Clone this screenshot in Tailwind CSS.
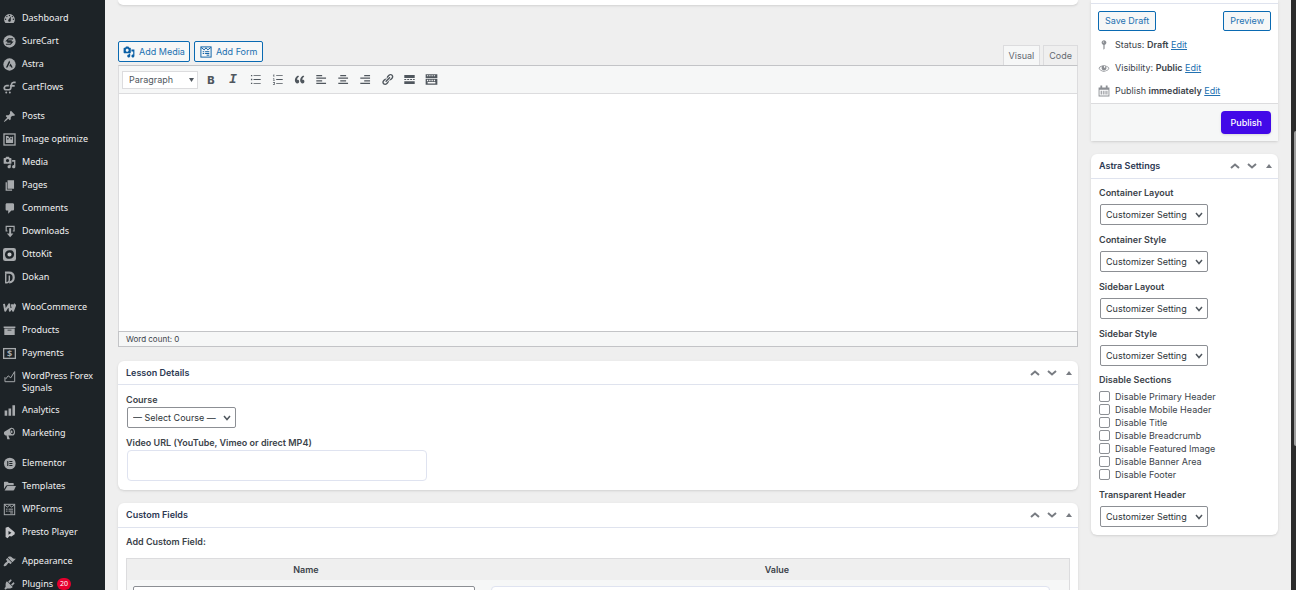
<!DOCTYPE html>
<html lang="en">
<head>
    <meta charset="UTF-8">
    <meta name="viewport" content="width=device-width, initial-scale=1.0">
    <script src="https://cdn.jsdelivr.net/npm/@tailwindcss/browser@4"></script>
    <title>Add New Lesson</title>
</head>
<body class="flex h-screen overflow-hidden bg-[#efefef] font-['Inter',sans-serif] text-[9px] leading-3 text-[#3c434a]">

    <!-- Admin menu -->
    <nav class="w-[105px] shrink-0 bg-[#1d2327] pt-[7px] font-['Noto_Sans',sans-serif] text-[#f0f0f1]" aria-label="Main menu">
        <ul class="mb-[6px]">
            <li><a href="#" class="flex gap-[6px] py-[5px] pl-[3px]">
                <svg class="size-[13px] shrink-0 fill-[#a7aaad]" viewBox="0 0 20 20" fill-rule="evenodd"><path d="M3.760 17h12.480A8.600 8.600 0 0 0 10 3a8.600 8.600 0 0 0-6.240 14zM10 4.200a1.100 1.100 0 1 1 0 2.200 1.100 1.100 0 0 1 0-2.200zM6 6a1.100 1.100 0 1 1 0 2.200A1.100 1.100 0 0 1 6 6zm8.400 0a1.100 1.100 0 1 1 0 2.200 1.100 1.100 0 0 1 0-2.200zM8.630 11.550 12 7v6c0 1.100-.9 2-2 2s-2-.9-2-2c0-.57.24-1.080.63-1.450zM4 10a1.100 1.100 0 1 1 0 2.200A1.100 1.100 0 0 1 4 10zm12 0a1.100 1.100 0 1 1 0 2.200 1.100 1.100 0 0 1 0-2.200z"/></svg>
                <span>Dashboard</span></a></li>
            <li><a href="#" class="flex gap-[6px] py-[5px] pl-[3px]">
                <svg class="size-[13px] shrink-0" viewBox="0 0 20 20"><circle cx="10" cy="10" r="9.500" fill="#a7aaad"/><path d="M15.500 6H8.500L5.500 9h8M4.500 14.200h7l3-3.200h-8" fill="none" stroke="#1d2327" stroke-width="1.700"/></svg>
                <span>SureCart</span></a></li>
            <li><a href="#" class="flex gap-[6px] py-[5px] pl-[3px]">
                <svg class="size-[13px] shrink-0" viewBox="0 0 20 20"><circle cx="10" cy="10" r="9.500" fill="#a7aaad"/><path d="M9.600 3.800 4.500 14.600h2.400l4-8zM11.700 8.400l-2.100 4.200h2.100l.8 2h2.500z" fill="#1d2327"/></svg>
                <span>Astra</span></a></li>
            <li><a href="#" class="flex gap-[6px] py-[5px] pl-[3px]">
                <svg class="size-[13px] shrink-0" viewBox="0 0 20 20" fill="none" stroke="#a7aaad" stroke-width="2.600"><path d="M19.500 2h-3c-2 0-3 1-3.400 3l-1 5.500c-.3 2-1.500 3-3.500 3H5c-2.500 0-3.500-1.500-3-3.500s1.500-3 3.500-3H9M10.500 7.500H18"/><circle cx="5" cy="17.700" r="1.500" fill="#a7aaad" stroke="none"/><circle cx="10.500" cy="17.700" r="1.500" fill="#a7aaad" stroke="none"/></svg>
                <span>CartFlows</span></a></li>
        </ul>
        <ul class="mb-[7px]">
            <li><a href="#" class="flex gap-[6px] py-[5px] pl-[3px]">
                <svg class="size-[13px] shrink-0 fill-[#a7aaad]" viewBox="0 0 20 20"><path d="M10.440 3.020l1.820-1.820 6.360 6.350-1.830 1.820c-1.050-.68-2.480-.57-3.410.36l-.75.75c-.92.93-1.040 2.350-.35 3.410l-1.830 1.820-2.410-2.410-2.800 2.790c-.42.42-3.380 2.710-3.800 2.290s1.860-3.390 2.280-3.810l2.790-2.790L4.100 9.360l1.830-1.820c1.050.69 2.480.57 3.400-.36l.75-.75c.93-.92 1.050-2.350.36-3.410z"/></svg>
                <span>Posts</span></a></li>
            <li><a href="#" class="flex gap-[6px] py-[5px] pl-[3px]">
                <svg class="size-[13px] shrink-0" viewBox="0 0 20 20"><rect x="1.500" y="1.500" width="17" height="17" fill="none" stroke="#a7aaad" stroke-width="2"/><path d="M4.500 4.500H8l2 3 2-2 1.500 1.500 2-2.500v11h-11z" fill="#a7aaad"/><circle cx="7.500" cy="9" r="1.200" fill="#1d2327"/><circle cx="12.500" cy="9" r="1.200" fill="#1d2327"/></svg>
                <span class="whitespace-nowrap">Image optimize</span></a></li>
            <li><a href="#" class="flex gap-[6px] py-[5px] pl-[3px]">
                <svg class="size-[13px] shrink-0 fill-[#a7aaad]" viewBox="0 0 20 20"><path d="M13 11V4c0-.55-.45-1-1-1h-1.670L9 1H5L3.670 3H2c-.55 0-1 .45-1 1v7c0 .55.45 1 1 1h10c.55 0 1-.45 1-1zM7 4.500c1.380 0 2.500 1.120 2.500 2.500S8.380 9.500 7 9.500 4.500 8.380 4.500 7 5.620 4.500 7 4.500zM14 6h5v10.500c0 1.380-1.120 2.500-2.500 2.500S14 17.880 14 16.500s1.120-2.500 2.500-2.500c.17 0 .34.02.5.05V9h-3V6zm-4 8.050V13h2v3.500c0 1.380-1.120 2.500-2.500 2.500S7 17.880 7 16.500 8.120 14 9.500 14c.17 0 .34.02.5.05z"/></svg>
                <span>Media</span></a></li>
            <li><a href="#" class="flex gap-[6px] py-[5px] pl-[3px]">
                <svg class="size-[13px] shrink-0 fill-[#a7aaad]" viewBox="0 0 20 20"><path d="M7 15V2h10v13H7zm-1 1h8v2H4V5h2v11z"/></svg>
                <span>Pages</span></a></li>
            <li><a href="#" class="flex gap-[6px] py-[5px] pl-[3px]">
                <svg class="size-[13px] shrink-0 fill-[#a7aaad]" viewBox="0 0 20 20"><path d="M6 2h9c1.100 0 2 .9 2 2v7c0 1.100-.9 2-2 2h-2l-5 5v-5H6c-1.100 0-2-.9-2-2V4c0-1.100.9-2 2-2z"/></svg>
                <span>Comments</span></a></li>
            <li><a href="#" class="flex gap-[6px] py-[5px] pl-[3px]">
                <svg class="size-[13px] shrink-0 fill-[#a7aaad]" viewBox="0 0 20 20"><path d="M4 1h14v9h-3V8.500h1.200V3H5.800v5.500H7V10H4z"/><path d="M9.500 5h3v8H16l-5 6-5-6h3.500z"/></svg>
                <span>Downloads</span></a></li>
            <li><a href="#" class="flex gap-[6px] py-[5px] pl-[3px]">
                <svg class="size-[13px] shrink-0" viewBox="0 0 20 20"><rect width="20" height="20" rx="3.500" fill="#a7aaad"/><path d="M3 10c0-4 3-6.500 7-6.500h2c3 0 5 3 5 6.500 0 4-3 6.500-7 6.500H8c-3 0-5-3-5-6.500z" fill="#1d2327"/><circle cx="10" cy="10" r="3.200" fill="#c8cacc"/></svg>
                <span>OttoKit</span></a></li>
            <li><a href="#" class="flex gap-[6px] py-[5px] pl-[3px]">
                <svg class="size-[13px] shrink-0" viewBox="0 0 20 20" fill="none" stroke="#a7aaad"><path d="M3 2.500h6c5 0 7.500 3 7.500 7.500s-3 7.500-7 7.500" stroke-width="3.400"/><path d="M4.200 4v14c4 .5 5.500-1.500 5.500-5V7" stroke-width="2.200"/></svg>
                <span>Dokan</span></a></li>
        </ul>
        <ul class="mb-[7px]">
            <li><a href="#" class="flex gap-[6px] py-[5px] pl-[3px]">
                <svg class="size-[13px] shrink-0" viewBox="0 0 20 20" fill="none" stroke="#a7aaad" stroke-width="3" stroke-linejoin="round"><path d="M1.500 4.500 3.500 15 9.500 5l1 10 8-10.500M13.500 5l2 10 3.500-9.500"/></svg>
                <span>WooCommerce</span></a></li>
            <li><a href="#" class="flex gap-[6px] py-[5px] pl-[3px]">
                <svg class="size-[13px] shrink-0 fill-[#a7aaad]" viewBox="0 0 20 20"><path d="M19 4v2H1V4h18zM2 7h16v10H2V7zm11 3V9H7v1h6z"/></svg>
                <span>Products</span></a></li>
            <li><a href="#" class="flex gap-[6px] py-[5px] pl-[3px]">
                <svg class="size-[13px] shrink-0" viewBox="0 0 20 20"><rect x="1" y="2.500" width="18" height="15" fill="none" stroke="#a7aaad" stroke-width="2"/><text x="10" y="15" text-anchor="middle" font-size="14" font-weight="700" fill="#a7aaad">$</text></svg>
                <span>Payments</span></a></li>
            <li><a href="#" class="flex gap-[6px] py-[5px] pl-[3px]">
                <svg class="size-[13px] shrink-0" viewBox="0 0 20 20" fill="none" stroke="#a7aaad" stroke-width="1.500"><path d="M3 11v7h15V2M4 14l4-5 4 3 5.500-9"/></svg>
                <span>WordPress Forex Signals</span></a></li>
            <li><a href="#" class="flex gap-[6px] py-[5px] pl-[3px]">
                <svg class="size-[13px] shrink-0 fill-[#a7aaad]" viewBox="0 0 20 20"><path d="M18.500 18V2h-4v16h4zm-6 0V7h-4v11h4zm-6 0v-8h-4v8h4z"/></svg>
                <span>Analytics</span></a></li>
            <li><a href="#" class="flex gap-[6px] py-[5px] pl-[3px]">
                <svg class="size-[13px] shrink-0 fill-[#a7aaad]" viewBox="0 0 20 20"><path d="M18.150 5.940c.46 1.620.38 3.220-.02 4.480-.42 1.280-1.260 2.180-2.300 2.480-.3.080-.54.100-.8.100h-6.800l2.220 5.500c.02.14-.06.26-.14.34-.08.100-.24.160-.34.160H6.950c-.1 0-.26-.06-.34-.16-.08-.08-.16-.2-.14-.34l-1-5.500H4.250c-.5.060-1.100-.2-1.560-.64s-.88-1.080-1.060-1.880c-.24-.8-.2-1.560-.02-2.200.18-.62.58-1.080 1.060-1.300l9-5.400c.3-.2.600-.4 1-.5 1.040-.3 2.240.1 3.220.98s1.840 2.240 2.260 3.880z"/><ellipse cx="14" cy="7" rx="2.700" ry="4.200" transform="rotate(-15 14 7)" fill="#1d2327"/><ellipse cx="13.300" cy="7.200" rx="1.300" ry="2" transform="rotate(-15 13.300 7.200)"/></svg>
                <span>Marketing</span></a></li>
        </ul>
        <ul class="mb-[6px]">
            <li><a href="#" class="flex gap-[6px] py-[5px] pl-[3px]">
                <svg class="size-[13px] shrink-0" viewBox="0 0 20 20"><circle cx="10.500" cy="10" r="9" fill="#a7aaad"/><path d="M6.500 6h1.700v8H6.500zM9.700 6h4.800v1.600H9.700zM9.700 9.200h4.800v1.600H9.700zM9.700 12.400h4.800V14H9.700z" fill="#1d2327"/></svg>
                <span>Elementor</span></a></li>
            <li><a href="#" class="flex gap-[6px] py-[5px] pl-[3px]">
                <svg class="size-[13px] shrink-0 fill-[#a7aaad]" viewBox="0 0 20 20"><path d="M1.500 14V3.500c0-.6.400-1 1-1H7l2 2h6.500c.6 0 1 .4 1 1V8H6.500c-.8 0-1.500.4-1.800 1z"/><path d="M6.500 9.200H20l-3 6.300c-.2.400-.6.700-1 .7H2.500z"/></svg>
                <span>Templates</span></a></li>
            <li><a href="#" class="flex gap-[6px] py-[5px] pl-[3px]">
                <svg class="size-[13px] shrink-0" viewBox="0 0 20 20" fill="none" stroke="#a7aaad" stroke-width="1.500"><rect x="2" y="2" width="16" height="16"/><path d="M2.500 3 7 6.500 10 3l3 3.500L17.500 3M4.500 9.500H7M8.500 9.500h7M4.500 12.500H7M8.500 12.500h7M11 15.300h4.500"/></svg>
                <span>WPForms</span></a></li>
            <li><a href="#" class="flex gap-[6px] py-[5px] pl-[3px]">
                <svg class="size-[13px] shrink-0" viewBox="0 0 20 20"><path d="M4 2.500 8 1l10 8.500v3L13 16l-3-.5L7 19l-3-2z" fill="#c3c4c7"/><path d="M8.500 7.500 13 10.300l-4.500 3z" fill="#1d2327"/></svg>
                <span>Presto Player</span></a></li>
        </ul>
        <ul>
            <li><a href="#" class="flex gap-[6px] py-[5px] pl-[3px]">
                <svg class="size-[13px] shrink-0 fill-[#a7aaad]" viewBox="0 0 20 20"><path d="M14.480 11.060L7.410 3.990l1.500-1.500c.5-.56 2.300-.47 3.510.32 1.210.8 1.430 1.280 2.910 2.100 1.180.64 2.450 1.260 4.450.85zm-.71.71L6.700 4.700 4.930 6.470c-.39.39-.39 1.020 0 1.410l1.060 1.060c.39.39.39 1.030 0 1.420-.6.600-1.430 1.110-2.210 1.690-.35.260-.7.530-1.010.84C1.430 14.230.4 16.080 1.400 17.070c.99 1 2.840-.03 4.180-1.360.31-.31.58-.66.85-1.020.57-.78 1.080-1.610 1.690-2.210.39-.39 1.020-.39 1.410 0l1.060 1.060c.39.39 1.020.39 1.410 0z"/></svg>
                <span>Appearance</span></a></li>
            <li><a href="#" class="flex gap-[6px] py-[5px] pl-[3px]">
                <svg class="size-[13px] shrink-0 fill-[#a7aaad]" viewBox="0 0 20 20"><path d="M13.110 4.360L9.870 7.600 8 5.730l3.240-3.240c.35-.34 1.050-.2 1.560.32.52.51.66 1.210.31 1.550zm-8 1.770l.91-1.120 9.010 9.010-1.190.84c-.71.71-2.630 1.160-3.820 1.160H6.140L4.900 17.260c-.59.59-1.540.59-2.120 0-.59-.58-.59-1.530 0-2.120l1.240-1.240v-3.880c0-1.130.4-3.190 1.090-3.890zm7.260 3.970l3.240-3.240c.34-.35 1.040-.21 1.550.31.52.51.66 1.210.31 1.550l-3.240 3.250z"/></svg>
                <span class="flex gap-1">Plugins <span class="h-3 rounded-full bg-[#e6002e] px-[3px] text-[7px] text-white">20</span></span></a></li>
        </ul>
    </nav>

    <div class="flex min-w-0 flex-1 gap-[13px] px-[13px]">
        <main class="min-w-0 flex-1">
            <div class="mb-9 h-[5px] rounded-b-md bg-white shadow-sm"></div>

            <!-- Editor -->
            <div class="flex items-start gap-1">
                <button type="button" class="flex h-[21px] items-center gap-1 rounded-xs border border-[#0a6ab2] bg-[#f6f7f7] px-1 text-[#2271b1]">
                    <svg class="size-3 fill-[#0a5fa5]" viewBox="0 0 20 20"><path d="M13 11V4c0-.55-.45-1-1-1h-1.670L9 1H5L3.670 3H2c-.55 0-1 .45-1 1v7c0 .55.45 1 1 1h10c.55 0 1-.45 1-1zM7 4.500c1.380 0 2.500 1.120 2.500 2.500S8.380 9.500 7 9.500 4.500 8.380 4.500 7 5.620 4.500 7 4.500zM14 6h5v10.500c0 1.380-1.120 2.500-2.500 2.500S14 17.880 14 16.500s1.120-2.500 2.500-2.500c.17 0 .34.02.5.05V9h-3V6zm-4 8.050V13h2v3.500c0 1.380-1.120 2.500-2.500 2.500S7 17.880 7 16.500 8.120 14 9.500 14c.17 0 .34.02.5.05z"/></svg>
                    Add Media
                </button>
                <button type="button" class="flex h-[21px] items-center gap-1 rounded-xs border border-[#0a6ab2] bg-[#f6f7f7] px-[5px] text-[#2271b1]">
                    <svg class="size-3" viewBox="0 0 20 20" fill="none" stroke="#0a5fa5" stroke-width="1.600"><rect x="1.500" y="1.500" width="17" height="17"/><path d="M2 2.500 7 6.500 10 3l3 3.500 5-4M4.500 9.500H7M8.500 9.500h7M4.500 12.500H7M8.500 12.500h7M11 15.300h4.500"/></svg>
                    Add Form
                </button>
                <div class="mt-1 ml-auto flex gap-[3px] text-[#646970]">
                    <button type="button" class="h-5 border border-b-0 border-[#dcdcde] bg-[#f6f7f7] px-[5px]">Visual</button>
                    <button type="button" class="h-5 border border-b-0 border-[#dcdcde] bg-[#efefef] px-[5px]">Code</button>
                </div>
            </div>
            <div class="border border-b-0 border-[#dcdcde] border-t-[#c3c4c7] bg-white">
                <div class="flex h-7 items-center border-b border-[#dcdcde] bg-[#f6f7f7] pl-[3px] text-[#50575e]">
                    <div class="relative mr-[2px]">
                        <select aria-label="Block format" class="block h-[18px] w-[76px] appearance-none border border-[#dcdcde] bg-white pl-[6px]">
                            <option>Paragraph</option>
                        </select>
                        <svg class="pointer-events-none absolute top-[7px] right-1 h-1 w-[5px] fill-[#50575e]" viewBox="0 0 5 4"><path d="M0 0h5L2.500 4z"/></svg>
                    </div>
                    <button type="button" aria-label="Bold" class="w-[22px] text-[11px] font-extrabold">B</button>
                    <button type="button" aria-label="Italic" class="w-[22px] font-['Liberation_Mono',monospace] text-[13px] font-bold italic">I</button>
                    <button type="button" aria-label="Bulleted list" class="flex w-[22px] justify-center"><svg class="size-[13px] fill-current" viewBox="0 0 20 20"><path d="M3 3h2v2H3zM3 9h2v2H3zM3 15h2v2H3zM7 3.300h11v1.400H7zM7 9.300h11v1.400H7zM7 15.300h11v1.400H7z"/></svg></button>
                    <button type="button" aria-label="Numbered list" class="flex w-[22px] justify-center"><svg class="size-[13px] fill-current" viewBox="0 0 20 20"><path d="M4 2h1v4H4zM3 3h1v1H3zM3 8h2v1H3zM4 9h1v2H4zM3 11h3v1H3zM3 14h3v1H3zM5 15h1v2H5zM3 17h3v1H3zM8 3.300h10v1.400H8zM8 9.300h10v1.400H8zM8 15.300h10v1.400H8z"/></svg></button>
                    <button type="button" aria-label="Blockquote" class="flex w-[22px] justify-center"><svg class="size-[13px] fill-current" viewBox="0 0 20 20"><path d="M9.490 13.220c0-.74-.2-1.380-.61-1.900-.62-.78-1.830-.88-2.530-.72-.29-1.650 1.110-3.750 2.920-4.650L7.880 4c-2.730 1.300-5.420 4.280-4.960 8.050C3.210 14.430 4.590 16 6.540 16c.85 0 1.560-.25 2.120-.75s.83-1.180.83-2.030zm8.050 0c0-.74-.2-1.380-.61-1.900-.63-.78-1.830-.88-2.530-.72-.29-1.650 1.110-3.750 2.920-4.650L15.930 4c-2.730 1.300-5.410 4.280-4.950 8.050.29 2.380 1.660 3.950 3.610 3.950.85 0 1.560-.25 2.120-.75s.83-1.180.83-2.030z"/></svg></button>
                    <button type="button" aria-label="Align left" class="flex w-[22px] justify-center"><svg class="size-[13px] fill-current" viewBox="0 0 20 20"><path d="M2 3h9v2H2zM2 7h15v2H2zM2 11h9v2H2zM2 15h15v2H2z"/></svg></button>
                    <button type="button" aria-label="Align center" class="flex w-[22px] justify-center"><svg class="size-[13px] fill-current" viewBox="0 0 20 20"><path d="M5 3h9v2H5zM2 7h15v2H2zM5 11h9v2H5zM2 15h15v2H2z"/></svg></button>
                    <button type="button" aria-label="Align right" class="flex w-[22px] justify-center"><svg class="size-[13px] fill-current" viewBox="0 0 20 20"><path d="M8 3h9v2H8zM2 7h15v2H2zM8 11h9v2H8zM2 15h15v2H2z"/></svg></button>
                    <button type="button" aria-label="Insert link" class="flex w-[22px] justify-center"><svg class="size-[13px] fill-current" viewBox="0 0 20 20"><path d="M17.740 2.760c1.680 1.690 1.680 4.410 0 6.100l-1.530 1.520c-1.120 1.120-2.700 1.470-4.140 1.090l2.620-2.610.76-.77.76-.76c.84-.84.84-2.200 0-3.040-.84-.85-2.200-.85-3.040 0l-.77.76-3.380 3.380c-.37-1.440-.02-3.020 1.100-4.140l1.520-1.530c1.690-1.680 4.420-1.680 6.100 0zM8.590 13.430l5.340-5.340c.42-.42.42-1.100 0-1.520-.44-.43-1.130-.39-1.530 0l-5.330 5.340c-.42.42-.42 1.100 0 1.520.44.43 1.130.39 1.520 0zm-.76 2.290l4.140-4.150c.38 1.440.03 3.020-1.090 4.140l-1.520 1.530c-1.690 1.680-4.410 1.680-6.100 0-1.680-1.680-1.680-4.420 0-6.100l1.530-1.520c1.120-1.120 2.700-1.470 4.140-1.100l-4.140 4.150c-.85.84-.85 2.200 0 3.050.84.840 2.200.84 3.040 0z"/></svg></button>
                    <button type="button" aria-label="Read more tag" class="flex w-[22px] justify-center"><svg class="size-[13px] fill-current" viewBox="0 0 20 20"><path d="M2 3h16v4.500H2zM2 9.200h3v1.600H2zM6.500 9.200h3v1.600h-3zM11 9.200h3v1.600h-3zM15.500 9.200H18v1.600h-2.500zM2 12.500h16V17H2z"/></svg></button>
                    <button type="button" aria-label="Toolbar toggle" class="flex w-[22px] justify-center"><svg class="size-[13px] fill-current" viewBox="0 0 20 20"><path fill-rule="evenodd" d="M1 2h18v16H1zM1 7.500V9h18V7.500zM3 3.500V5h2V3.500zM6.500 3.500V5h2V3.500zM10 3.500V5h2V3.500zM13.500 3.500V5h2V3.500zM3 10.500v2h2v-2zM6.500 10.500v2h2v-2zM10 10.500v2h2v-2zM13.500 10.500v2h2v-2zM4 14v2h12v-2z"/></svg></button>
                </div>
                <textarea aria-label="Lesson content" class="block h-[237px] w-full resize-none p-2 outline-none"></textarea>
            </div>
            <div class="h-4 border border-[#c3c4c7] bg-[#f6f7f7] px-[7px] text-[8px] leading-[14px]">Word count: 0</div>

            <!-- Lesson details -->
            <section class="mt-[14px] rounded-md bg-white shadow-sm">
                <header class="flex h-6 items-center border-b border-[#dfe3ee] pr-px pl-2">
                    <h2 class="mr-auto font-semibold text-[#2c3852]">Lesson Details</h2>
                    <button type="button" aria-label="Move up" class="w-[17px]"><svg class="mx-auto h-[6px] w-[10px] fill-none stroke-[#787c82] stroke-2" viewBox="0 0 10 6"><path d="M1 5 5 1.500 9 5"/></svg></button>
                    <button type="button" aria-label="Move down" class="w-[17px]"><svg class="mx-auto h-[6px] w-[10px] fill-none stroke-[#787c82] stroke-2" viewBox="0 0 10 6"><path d="M1 1 5 4.500 9 1"/></svg></button>
                    <button type="button" aria-label="Toggle panel" class="w-[17px]"><svg class="mx-auto h-1 w-[6px] fill-[#787c82]" viewBox="0 0 6 4"><path d="M3 0 6 4H0z"/></svg></button>
                </header>
                <div class="px-2 pt-[9px] pb-[9px]">
                    <label for="course" class="block font-semibold">Course</label>
                    <div class="relative mt-px ml-px w-[109px]">
                        <select id="course" class="block h-[21px] w-full appearance-none rounded-xs border border-[#8c8f94] bg-white pl-[5px] text-[#2c3338]">
                            <option>— Select Course —</option>
                        </select>
                        <svg class="pointer-events-none absolute top-2 right-[5px] h-[6px] w-2 fill-none stroke-[#50575e] stroke-[1.500]" viewBox="0 0 8 6"><path d="M1 1 4 4.500 7 1"/></svg>
                    </div>
                    <label for="video-url" class="mt-[9px] block font-semibold">Video URL (YouTube, Vimeo or direct MP4)</label>
                    <input type="url" id="video-url" class="mt-px ml-px block h-[31px] w-[300px] rounded-sm border border-[#dfe3f0] px-2">
                </div>
            </section>

            <!-- Custom fields -->
            <section class="mt-[13px] rounded-md bg-white shadow-sm">
                <header class="flex h-[25px] items-center border-b border-[#dfe3ee] pr-px pl-2">
                    <h2 class="mr-auto font-semibold text-[#2c3852]">Custom Fields</h2>
                    <button type="button" aria-label="Move up" class="w-[17px]"><svg class="mx-auto h-[6px] w-[10px] fill-none stroke-[#787c82] stroke-2" viewBox="0 0 10 6"><path d="M1 5 5 1.500 9 5"/></svg></button>
                    <button type="button" aria-label="Move down" class="w-[17px]"><svg class="mx-auto h-[6px] w-[10px] fill-none stroke-[#787c82] stroke-2" viewBox="0 0 10 6"><path d="M1 1 5 4.500 9 1"/></svg></button>
                    <button type="button" aria-label="Toggle panel" class="w-[17px]"><svg class="mx-auto h-1 w-[6px] fill-[#787c82]" viewBox="0 0 6 4"><path d="M3 0 6 4H0z"/></svg></button>
                </header>
                <div class="p-2">
                    <p class="font-semibold">Add Custom Field:</p>
                    <table class="mt-[10px] w-full table-fixed border-separate border-spacing-0 border border-[#dcdcde] bg-[#f6f7f7]">
                        <thead class="bg-[#efefef]">
                            <tr>
                                <th class="h-[21px] w-[38%] font-semibold">Name</th>
                                <th class="h-[21px] font-semibold">Value</th>
                            </tr>
                        </thead>
                        <tbody>
                            <tr class="align-top">
                                <td class="pt-[6px] pr-[10px] pb-2 pl-[6px]">
                                    <select aria-label="Name" class="block h-[21px] w-full appearance-none rounded-xs border border-[#8c8f94] bg-white pl-[5px]">
                                        <option>— Select —</option>
                                    </select>
                                </td>
                                <td class="pt-[6px] pr-[19px] pb-2 pl-[6px]">
                                    <textarea aria-label="Value" rows="2" class="block w-full rounded-sm border border-[#dfe3f0] bg-white"></textarea>
                                </td>
                            </tr>
                        </tbody>
                    </table>
                </div>
            </section>
        </main>

        <aside class="w-[187px] shrink-0">
            <!-- Publish box -->
            <section class="bg-white shadow-sm">
                <div class="h-1 border-b border-[#dfe3ee]"></div>
                <div class="flex justify-between px-[7px] pt-[7px] text-[#2271b1]">
                    <button type="button" class="h-5 rounded-xs border border-[#0a6ab2] bg-[#f6f7f7] px-[6px]">Save Draft</button>
                    <button type="button" class="h-5 rounded-xs border border-[#0a6ab2] bg-[#f6f7f7] px-[6px]">Preview</button>
                </div>
                <ul class="px-[7px] pt-2">
                    <li class="flex h-[23px] gap-[5px]">
                        <svg class="size-3 fill-[#8c8f94]" viewBox="0 0 20 20"><path d="M14 6c0 1.860-1.280 3.410-3 3.860V16c0 1-2 2-2 2V9.860c-1.720-.45-3-2-3-3.860 0-2.210 1.790-4 4-4s4 1.790 4 4zM8 5c0 .55.45 1 1 1s1-.45 1-1-.45-1-1-1-1 .45-1 1z"/></svg>
                        <span>Status: <b class="font-semibold">Draft</b> <a href="#" class="text-[#2271b1] underline">Edit</a></span>
                    </li>
                    <li class="flex h-[23px] gap-[5px]">
                        <svg class="size-3 fill-[#8c8f94]" viewBox="0 0 20 20"><path d="M18.300 9.500C15 4.900 8.500 3.800 3.900 7.200c-1.200.9-2.200 2.100-3 3.400.2.400.5.800.8 1.200 3.300 4.600 9.600 5.600 14.200 2.400.9-.7 1.700-1.400 2.400-2.400.3-.4.5-.8.8-1.200-.3-.4-.5-.8-.8-1.100zm-8.200-2.300c.5-.5 1.300-.5 1.800 0s.5 1.300 0 1.800-1.300.5-1.800 0-.5-1.300 0-1.800zm-.1 7.700c-3.100 0-6-1.600-7.700-4.200C3.500 9 5.100 7.800 7 7.200c-.7.800-1 1.700-1 2.700 0 2.200 1.700 4.100 4 4.100 2.200 0 4.100-1.700 4.100-4v-.1c0-1-.4-2-1.100-2.700 1.900.6 3.500 1.800 4.700 3.500-1.700 2.600-4.600 4.200-7.700 4.200z"/></svg>
                        <span>Visibility: <b class="font-semibold">Public</b> <a href="#" class="text-[#2271b1] underline">Edit</a></span>
                    </li>
                    <li class="flex h-[18px] gap-[5px]">
                        <svg class="size-3 fill-[#8c8f94]" viewBox="0 0 20 20"><path fill-rule="evenodd" d="M1 4h3V1h3v3h6V1h3v3h3v15H1zM2.500 8v9.500h15V8zM4.500 9.500h1.800V16H4.500zM8 9.500h1.500V16H8zM11 9.500h1.500V16H11zM14 9.500h1.700V16H14z"/></svg>
                        <span>Publish <b class="font-semibold">immediately</b> <a href="#" class="text-[#2271b1] underline">Edit</a></span>
                    </li>
                </ul>
                <div class="flex h-[38px] items-center justify-end border-t border-[#dcdcde] bg-[#f6f7f7] px-[7px]">
                    <button type="button" class="h-[23px] rounded-sm bg-[#4209e8] px-[9px] font-medium text-white shadow-sm">Publish</button>
                </div>
            </section>

            <!-- Astra settings -->
            <section class="mt-[13px] rounded-md bg-white shadow-sm">
                <header class="flex h-[25px] items-center border-b border-[#dfe3ee] pr-px pl-2">
                    <h2 class="mr-auto font-semibold text-[#2c3852]">Astra Settings</h2>
                    <button type="button" aria-label="Move up" class="w-[17px]"><svg class="mx-auto h-[6px] w-[10px] fill-none stroke-[#787c82] stroke-2" viewBox="0 0 10 6"><path d="M1 5 5 1.500 9 5"/></svg></button>
                    <button type="button" aria-label="Move down" class="w-[17px]"><svg class="mx-auto h-[6px] w-[10px] fill-none stroke-[#787c82] stroke-2" viewBox="0 0 10 6"><path d="M1 1 5 4.500 9 1"/></svg></button>
                    <button type="button" aria-label="Toggle panel" class="w-[17px]"><svg class="mx-auto h-1 w-[6px] fill-[#787c82]" viewBox="0 0 6 4"><path d="M3 0 6 4H0z"/></svg></button>
                </header>
                <div class="p-2">
                    <label for="container-layout" class="block font-semibold">Container Layout</label>
                    <div class="relative mt-[5px] mb-[9px] ml-px w-[108px]">
                        <select id="container-layout" class="block h-[21px] w-full appearance-none rounded-xs border border-[#8c8f94] bg-white pl-[5px] text-[#2c3338]">
                            <option>Customizer Setting</option>
                        </select>
                        <svg class="pointer-events-none absolute top-2 right-[5px] h-[6px] w-2 fill-none stroke-[#50575e] stroke-[1.500]" viewBox="0 0 8 6"><path d="M1 1 4 4.500 7 1"/></svg>
                    </div>
                    <label for="container-style" class="block font-semibold">Container Style</label>
                    <div class="relative mt-[5px] mb-[9px] ml-px w-[108px]">
                        <select id="container-style" class="block h-[21px] w-full appearance-none rounded-xs border border-[#8c8f94] bg-white pl-[5px] text-[#2c3338]">
                            <option>Customizer Setting</option>
                        </select>
                        <svg class="pointer-events-none absolute top-2 right-[5px] h-[6px] w-2 fill-none stroke-[#50575e] stroke-[1.500]" viewBox="0 0 8 6"><path d="M1 1 4 4.500 7 1"/></svg>
                    </div>
                    <label for="sidebar-layout" class="block font-semibold">Sidebar Layout</label>
                    <div class="relative mt-[5px] mb-[9px] ml-px w-[108px]">
                        <select id="sidebar-layout" class="block h-[21px] w-full appearance-none rounded-xs border border-[#8c8f94] bg-white pl-[5px] text-[#2c3338]">
                            <option>Customizer Setting</option>
                        </select>
                        <svg class="pointer-events-none absolute top-2 right-[5px] h-[6px] w-2 fill-none stroke-[#50575e] stroke-[1.500]" viewBox="0 0 8 6"><path d="M1 1 4 4.500 7 1"/></svg>
                    </div>
                    <label for="sidebar-style" class="block font-semibold">Sidebar Style</label>
                    <div class="relative mt-[5px] mb-2 ml-px w-[108px]">
                        <select id="sidebar-style" class="block h-[21px] w-full appearance-none rounded-xs border border-[#8c8f94] bg-white pl-[5px] text-[#2c3338]">
                            <option>Customizer Setting</option>
                        </select>
                        <svg class="pointer-events-none absolute top-2 right-[5px] h-[6px] w-2 fill-none stroke-[#50575e] stroke-[1.500]" viewBox="0 0 8 6"><path d="M1 1 4 4.500 7 1"/></svg>
                    </div>
                    <fieldset>
                        <legend class="mb-1 font-semibold">Disable Sections</legend>
                        <label class="flex h-[13px] items-center gap-[5px]"><input type="checkbox" class="size-[11px] appearance-none rounded-xs border border-[#8c8f94] bg-white">Disable Primary Header</label>
                        <label class="flex h-[13px] items-center gap-[5px]"><input type="checkbox" class="size-[11px] appearance-none rounded-xs border border-[#8c8f94] bg-white">Disable Mobile Header</label>
                        <label class="flex h-[13px] items-center gap-[5px]"><input type="checkbox" class="size-[11px] appearance-none rounded-xs border border-[#8c8f94] bg-white">Disable Title</label>
                        <label class="flex h-[13px] items-center gap-[5px]"><input type="checkbox" class="size-[11px] appearance-none rounded-xs border border-[#8c8f94] bg-white">Disable Breadcrumb</label>
                        <label class="flex h-[13px] items-center gap-[5px]"><input type="checkbox" class="size-[11px] appearance-none rounded-xs border border-[#8c8f94] bg-white">Disable Featured Image</label>
                        <label class="flex h-[13px] items-center gap-[5px]"><input type="checkbox" class="size-[11px] appearance-none rounded-xs border border-[#8c8f94] bg-white">Disable Banner Area</label>
                        <label class="flex h-[13px] items-center gap-[5px]"><input type="checkbox" class="size-[11px] appearance-none rounded-xs border border-[#8c8f94] bg-white">Disable Footer</label>
                    </fieldset>
                    <label for="transparent-header" class="mt-2 block font-semibold">Transparent Header</label>
                    <div class="relative mt-[5px] ml-px w-[108px]">
                        <select id="transparent-header" class="block h-[21px] w-full appearance-none rounded-xs border border-[#8c8f94] bg-white pl-[5px] text-[#2c3338]">
                            <option>Customizer Setting</option>
                        </select>
                        <svg class="pointer-events-none absolute top-2 right-[5px] h-[6px] w-2 fill-none stroke-[#50575e] stroke-[1.500]" viewBox="0 0 8 6"><path d="M1 1 4 4.500 7 1"/></svg>
                    </div>
                </div>
            </section>
        </aside>
    </div>

    <!-- Scrollbar track -->
    <div class="w-[5px] shrink-0 bg-[#2c2c2c] pt-[131px]">
        <div class="ml-auto h-[315px] w-[2px] rounded-l-full bg-[#9f9f9f]"></div>
    </div>

</body>
</html>
